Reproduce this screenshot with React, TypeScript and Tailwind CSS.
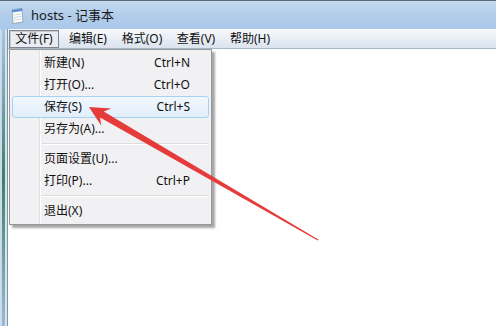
import React from 'react';

const FONT = '"Noto Sans", "Noto Sans CJK SC", sans-serif';

type Item = { label: string; shortcut?: string; active?: boolean } | 'sep';

const fileItems: Item[] = [
  { label: '新建(N)', shortcut: 'Ctrl+N' },
  { label: '打开(O)...', shortcut: 'Ctrl+O' },
  { label: '保存(S)', shortcut: 'Ctrl+S', active: true },
  { label: '另存为(A)...' },
  'sep',
  { label: '页面设置(U)...' },
  { label: '打印(P)...', shortcut: 'Ctrl+P' },
  'sep',
  { label: '退出(X)' },
];

const menus = ['文件(F)', '编辑(E)', '格式(O)', '查看(V)', '帮助(H)'];

const NotepadIcon = () => (
  <svg width="14" height="17" viewBox="0 0 14 17" className="shrink-0">
    <path d="M2 3 L12 1.5 L13 15 L3 16.5 Z" fill="#fdfdfd" stroke="#8a9aab" strokeWidth="0.8" />
    <path d="M2 3 L12 1.5 L12.2 4 L2.2 5.5 Z" fill="#5b8fd0" />
    <path d="M3.5 8 L11 7 M3.7 10.5 L11.2 9.5 M3.9 13 L11.4 12" stroke="#b8c4d0" strokeWidth="0.7" />
  </svg>
);

// red annotation arrow drawn over the window
const Arrow = () => (
  <svg width="496" height="326" className="absolute left-0 top-0 pointer-events-none">
    <polygon
      points="89,107 111.3,108.5 103.7,111.6 318.3,239.6 317.7,240.4 100.1,117.6 101.3,125.7"
      fill="#e53b3b"
    />
  </svg>
);

export default function App() {
  return (
    <div
      className="relative w-[496px] h-[326px] overflow-hidden bg-white text-[#111]"
      style={{ fontFamily: FONT }}
    >
      {/* title bar */}
      <div className="h-[29px] flex items-center gap-[7px] pl-[10px] border-t border-[#5a6878] bg-gradient-to-b from-[#c3d9ef] via-[#b2cdea] to-[#a9c8ea]">
        <NotepadIcon />
        <span className="text-[13px] leading-none text-[#1b1b1b]">hosts - 记事本</span>
      </div>

      <div className="flex h-[297px]">
        {/* left frame */}
        <div className="flex w-[8px] shrink-0">
          <div className="w-[2px] bg-[#c9dcef]" />
          <div className="w-[3px] bg-gradient-to-b from-[#a9c6e2] via-[#3f7f60] to-[#9db9cf]" />
          <div className="w-[2px] bg-[#d6e4f1]" />
          <div className="w-[1px] bg-[#8393a6]" />
        </div>

        <div className="flex-1 flex flex-col">
          {/* menu bar */}
          <div className="h-[20px] flex items-center pl-[1px] gap-[4px] border-b border-[#a9b6c6] bg-gradient-to-b from-[#f7f9fc] to-[#dbe3ee]">
            {menus.map((m, i) => (
              <div
                key={m}
                className={
                  'w-[50px] h-[18px] flex items-center justify-center text-[12px] leading-none ' +
                  (i === 0 ? 'border border-[#7f8590] bg-[#e9edf3] shadow-[inset_1px_1px_0_#c8ccd2]' : '')
                }
              >
                {m}
              </div>
            ))}
          </div>
          <div className="flex-1 bg-white" />
        </div>
      </div>

      {/* dropdown */}
      <div className="absolute left-[9px] top-[49px] w-[203px] border border-[#979797] bg-[#f1f0f2] pt-[2px] pb-[2px] shadow-[3px_3px_2px_rgba(0,0,0,0.35)]">
        <div className="absolute left-[29px] top-0 bottom-0 w-[2px] border-l border-[#e0e0e0] bg-white" />
        {fileItems.map((it, i) =>
          it === 'sep' ? (
            <div key={i} className="relative h-[8px] flex items-center pl-[32px] pr-[3px]">
              <div className="flex-1 h-[2px] border-t border-[#dcdcdc] bg-white" />
            </div>
          ) : (
            <div
              key={i}
              className={
                'relative mx-[2px] h-[22px] flex items-center pl-[31px] pr-[18px] text-[12px] leading-none ' +
                (it.active
                  ? 'border border-[#a8d1ef] rounded-[3px] bg-gradient-to-b from-[#f1f7fd] to-[#e1eefb]'
                  : 'border border-transparent')
              }
            >
              <span className="flex-1">{it.label}</span>
              {it.shortcut && <span>{it.shortcut}</span>}
            </div>
          )
        )}
      </div>

      <Arrow />
    </div>
  );
}
